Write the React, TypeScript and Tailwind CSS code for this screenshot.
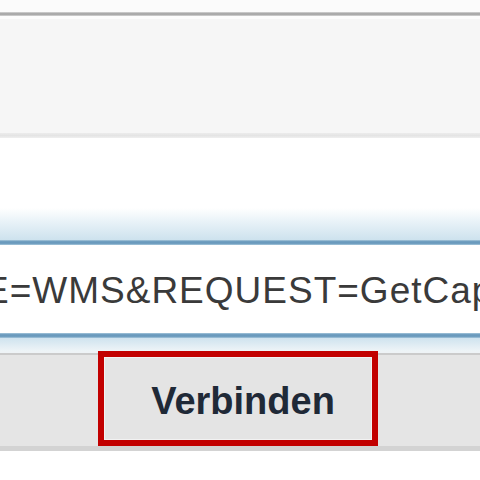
import React from 'react';

export default function App() {
  const url = 'E=WMS&REQUEST=GetCapabilities&VERSION=1.3.0';

  return (
    <div className="w-[480px] h-[480px] overflow-hidden bg-white" style={{ fontFamily: '"Liberation Sans", Arial, sans-serif' }}>
      {/* top toolbar edge */}
      <div className="h-[12px] bg-[#fbfbfb]" />
      <div className="h-[4px] bg-[linear-gradient(#d6d6d6,#9c9c9c,#d6d6d6)]" />
      <div className="h-[3px] bg-[#fcfcfc]" />
      <div className="h-[114px] bg-[#f6f6f6]" />
      <div className="h-[5px] bg-[linear-gradient(#ececec,#e4e4e4,#efefef)]" />
      <div className="h-[70px] bg-white" />

      {/* url field with focus glow */}
      <div className="h-[32px] bg-[linear-gradient(#ffffff,#eaf3f8_40%,#cde2ee)]" />
      <div className="h-[5px] bg-[linear-gradient(#a8c8dc,#6a9abd,#6a9abd,#a8c8dc)]" />
      <div className="h-[88px] bg-white overflow-hidden pt-[27px]">
        <div className="ml-[-16px] whitespace-nowrap text-[37px] leading-[37px] tracking-[1px] text-[#3a3a3a]">{url}</div>
      </div>
      <div className="h-[5px] bg-[linear-gradient(#a8c8dc,#6a9abd,#6a9abd,#a8c8dc)]" />
      <div className="h-[13px] bg-[linear-gradient(#cfe3ef,#eef4f7)]" />

      {/* button bar */}
      <div className="h-[100px] bg-[linear-gradient(#eef3f6_0px,#eef3f6_2px,#cbcbcb_2px,#cbcbcb_4px,#e5e5e5_4px,#e5e5e5_95px,#d3d3d3_95px,#d3d3d3_100px)]">
        <div className="ml-[98px] w-[280px] h-[95px] border-[6px] border-[#c20000]">
          <div className="h-full border border-[#f2f2f2] bg-[#e4e4e4] pt-[24px] pl-[10px] text-center">
            <span className="text-[38px] leading-[38px] font-bold text-[#1f2937]">Verbinden</span>
          </div>
        </div>
      </div>
    </div>
  );
}
